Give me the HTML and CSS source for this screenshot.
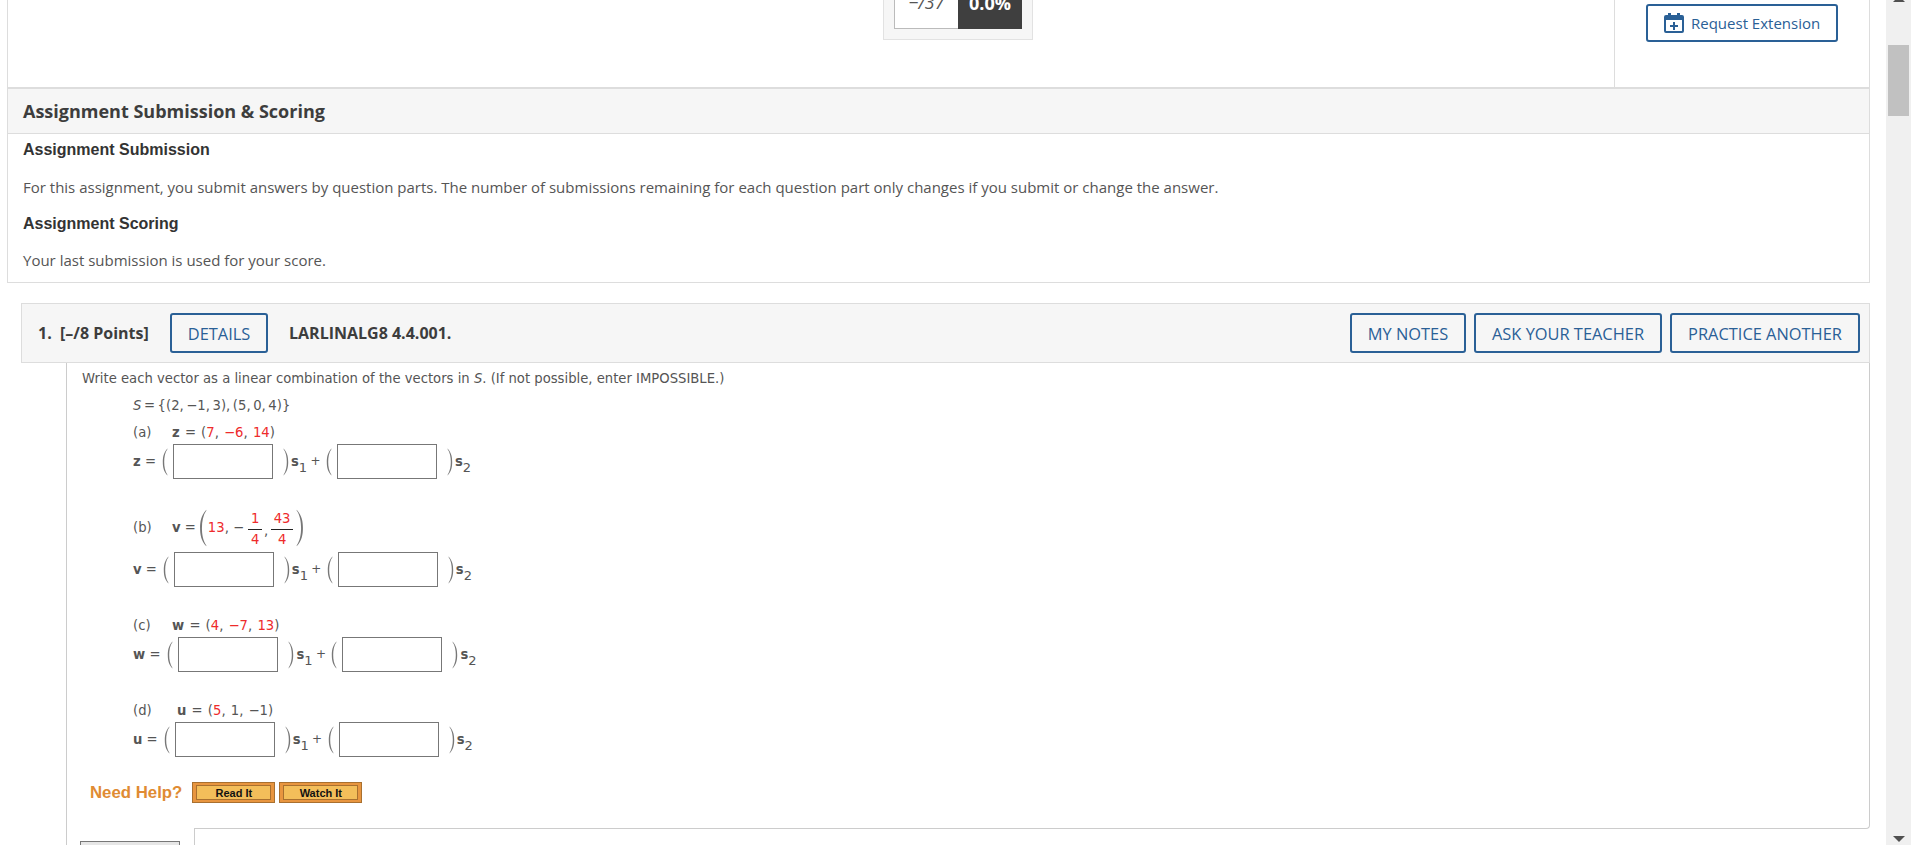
FILE: index.html
```html
<!DOCTYPE html>
<html lang="en">

<head>
    <meta charset="UTF-8">
    <meta name="viewport" content="width=device-width, initial-scale=1.0">
    <link rel="stylesheet" href="styles.css">
    <title>Assignment</title>
</head>

<body>
    <svg class="defs" width="0" height="0">
        <symbol id="lp" viewBox="0 0 6 30" preserveAspectRatio="none">
            <path d="M5.5 0.5C1.5 5 0.8 10 0.8 15C0.8 20 1.5 25 5.5 29.5L5.5 28.8C3 25 2.2 20 2.2 15C2.2 10 3 5 5.5 1.2Z" />
        </symbol>
        <symbol id="rp" viewBox="0 0 6 30" preserveAspectRatio="none">
            <path d="M0.5 0.5C4.5 5 5.2 10 5.2 15C5.2 20 4.5 25 0.5 29.5L0.5 28.8C3 25 3.8 20 3.8 15C3.8 10 3 5 0.5 1.2Z" />
        </symbol>
    </svg>

    <div class="page">
        <div class="main">
            <div class="assignment">
                <div class="top">
                    <div class="score-area">
                        <div class="score">
                            <span class="score-pts">&minus;/37</span>
                            <span class="score-pct">0.0%</span>
                        </div>
                    </div>
                    <div class="top-side">
                        <button class="btn btn-ext">
                            <svg class="cal" width="20" height="20" viewBox="0 0 20 20">
                                <path fill="#2a6096" d="M4 0h3v2h6V0h3v2h2a2 2 0 0 1 2 2v14a2 2 0 0 1-2 2H2a2 2 0 0 1-2-2V4a2 2 0 0 1 2-2h2zM2 7v10.500a.5.5 0 0 0 .5.500h15a.5.5 0 0 0 .5-.500V7z" />
                                <path fill="#2a6096" d="M9 9h2v3h3v2h-3v3H9v-3H6v-2h3z" />
                            </svg>
                            Request Extension
                        </button>
                    </div>
                </div>
                <h2 class="section-title">Assignment Submission &amp; Scoring</h2>
                <div class="section-body">
                    <h4>Assignment Submission</h4>
                    <p>For this assignment, you submit answers by question parts. The number of submissions remaining for each question part only changes if you submit or change the answer.</p>
                    <h4>Assignment Scoring</h4>
                    <p>Your last submission is used for your score.</p>
                </div>
            </div>

            <div class="q-head">
                <span class="q-num">1.</span>
                <span class="q-pts">[&ndash;/8 Points]</span>
                <button class="btn btn-details">DETAILS</button>
                <span class="q-code">LARLINALG8 4.4.001.</span>
                <div class="q-actions">
                    <button class="btn btn-my">MY NOTES</button>
                    <button class="btn btn-ask">ASK YOUR TEACHER</button>
                    <button class="btn btn-prac">PRACTICE ANOTHER</button>
                </div>
            </div>

            <div class="q-wrap">
                <div class="q-text">
                    <div class="prompt">Write each vector as a linear combination of the vectors in <i>S</i>. (If not possible, enter IMPOSSIBLE.)</div>
                    <div class="parts">
                        <div class="line set"><i>S</i> = {(2, &minus;1, 3), (5, 0, 4)}</div>

                        <div class="line part"><span class="tag">(a)</span><b>z</b>&nbsp;= (<span class="red">7</span>, <span class="red">&minus;6</span>, <span class="red">14</span>)</div>
                        <div class="eq">
                            <span class="lhs"><b>z</b> =</span>
                            <svg class="paren"><use href="#lp" /></svg>
                            <input class="ans" type="text">
                            <svg class="paren pr"><use href="#rp" /></svg>
                            <span class="s"><b>s</b><sub>1</sub></span>
                            <span class="plus">+</span>
                            <svg class="paren"><use href="#lp" /></svg>
                            <input class="ans" type="text">
                            <svg class="paren pr"><use href="#rp" /></svg>
                            <span class="s"><b>s</b><sub>2</sub></span>
                        </div>

                        <div class="line part part-b">
                            <span class="tag">(b)</span><b>v</b>&nbsp;=
                            <svg class="paren big"><use href="#lp" /></svg>
                            <span class="red">13</span>,&nbsp;<span class="minus">&minus;</span>
                            <span class="frac"><span class="red">1</span><span class="red bot">4</span></span><span class="fcomma">,</span>
                            <span class="frac frac-w"><span class="red">43</span><span class="red bot">4</span></span>
                            <svg class="paren big"><use href="#rp" /></svg>
                        </div>
                        <div class="eq eq-v">
                            <span class="lhs"><b>v</b> =</span>
                            <svg class="paren"><use href="#lp" /></svg>
                            <input class="ans" type="text">
                            <svg class="paren pr"><use href="#rp" /></svg>
                            <span class="s"><b>s</b><sub>1</sub></span>
                            <span class="plus">+</span>
                            <svg class="paren"><use href="#lp" /></svg>
                            <input class="ans" type="text">
                            <svg class="paren pr"><use href="#rp" /></svg>
                            <span class="s"><b>s</b><sub>2</sub></span>
                        </div>

                        <div class="line part part-c"><span class="tag">(c)</span><b>w</b>&nbsp;= (<span class="red">4</span>, <span class="red">&minus;7</span>, <span class="red">13</span>)</div>
                        <div class="eq">
                            <span class="lhs lhs-w"><b>w</b> =</span>
                            <svg class="paren"><use href="#lp" /></svg>
                            <input class="ans" type="text">
                            <svg class="paren pr"><use href="#rp" /></svg>
                            <span class="s"><b>s</b><sub>1</sub></span>
                            <span class="plus">+</span>
                            <svg class="paren"><use href="#lp" /></svg>
                            <input class="ans" type="text">
                            <svg class="paren pr"><use href="#rp" /></svg>
                            <span class="s"><b>s</b><sub>2</sub></span>
                        </div>

                        <div class="line part part-c"><span class="tag tag-d">(d)</span><b>u</b>&nbsp;= (<span class="red">5</span>, 1, &minus;1)</div>
                        <div class="eq">
                            <span class="lhs"><b>u</b> =</span>
                            <svg class="paren"><use href="#lp" /></svg>
                            <input class="ans" type="text">
                            <svg class="paren pr"><use href="#rp" /></svg>
                            <span class="s"><b>s</b><sub>1</sub></span>
                            <span class="plus">+</span>
                            <svg class="paren"><use href="#lp" /></svg>
                            <input class="ans" type="text">
                            <svg class="paren pr"><use href="#rp" /></svg>
                            <span class="s"><b>s</b><sub>2</sub></span>
                        </div>
                    </div>
                    <div class="help">
                        <span class="help-label">Need Help?</span>
                        <span class="help-btn"><span>Read It</span></span>
                        <span class="help-btn"><span>Watch It</span></span>
                    </div>
                </div>
                <div class="q-foot"></div>
                <div class="q-low">
                    <div class="gray-btn"></div>
                    <div class="answers"></div>
                </div>
            </div>
        </div>

        <div class="scrollbar">
            <span class="arrow-up"></span>
            <span class="thumb"></span>
            <span class="arrow-down"></span>
        </div>
    </div>
</body>

</html>
```

FILE: styles.css
```css
* {
    box-sizing: border-box;
}

html,
body {
    margin: 0;
    height: 845px;
    overflow: hidden;
    background-color: #fff;
}

body {
    font-family: "Open Sans", sans-serif;
    color: #444;
}

.defs {
    position: absolute;
}

.page {
    display: flex;
    height: 845px;
}

.main {
    width: 1886px;
    padding: 0 16px 0 7px;
}

/* top box */
.assignment {
    border: 1px solid #ddd;
    border-top: none;
    height: 282.5px;
}

.top {
    display: flex;
    height: 87px;
    overflow: hidden;
}

.score-area {
    flex: 1;
    display: flex;
    align-items: flex-end;
    padding-left: 875px;
    padding-bottom: 47px;
}

.score {
    display: flex;
    background-color: #f6f6f6;
    border: 1px solid #e2e2e2;
    padding: 0 10px 10px;
    height: 70px;
}

.score-pts,
.score-pct {
    width: 64px;
    display: flex;
    justify-content: center;
    align-items: flex-end;
    padding-bottom: 16px;
    font-size: 18px;
    line-height: 20px;
}

.score-pts {
    background-color: #fff;
    border: 1px solid #bbb;
    border-top: none;
    border-right: none;
    font-style: italic;
    color: #555;
}

.score-pct {
    background-color: #3f3f3f;
    color: #fff;
    font-weight: 700;
}

.top-side {
    width: 255px;
    border-left: 1px solid #ddd;
    padding: 4px 31px 0;
}

.btn {
    font-family: "Open Sans", sans-serif;
    color: #2a6096;
    background: transparent;
    border: 2px solid #2a6096;
    border-radius: 3px;
    padding: 0;
    font-size: 16.4px;
    height: 40px;
}

.btn-ext {
    width: 192px;
    height: 38px;
    font-size: 15px;
    background: #fff;
    display: flex;
    align-items: center;
    padding-left: 16px;
    gap: 7px;
}

.section-title {
    margin: 0;
    height: 47px;
    background-color: #f6f6f6;
    border-top: 2px solid #ddd;
    border-bottom: 1px solid #ddd;
    padding-left: 15px;
    font-size: 18px;
    line-height: 45px;
    font-weight: 700;
    color: #3d3d3d;
}

.section-body {
    padding-left: 15px;
}

.section-body h4 {
    margin: 6px 0 0;
    font-family: "Liberation Sans", sans-serif;
    font-size: 16px;
    line-height: 20px;
    color: #333;
}

.section-body p {
    margin: 17px 0 17px;
    font-size: 15px;
    line-height: 20px;
    color: #555;
}

.section-body p:last-child {
    margin-top: 16px;
}

/* question header */
.q-head {
    display: flex;
    align-items: center;
    margin: 20.500px 0 0 14px;
    height: 60px;
    background-color: #f6f6f6;
    border: 1px solid #ddd;
    padding-left: 16px;
    font-size: 16px;
    font-weight: 700;
    color: #3d3d3d;
}

.q-num {
    width: 22px;
}

.q-pts {
    width: 110px;
}

.btn-details {
    width: 98px;
}

.q-code {
    margin-left: 21px;
}

.q-actions {
    margin-left: auto;
    display: flex;
    gap: 8px;
    padding-right: 9px;
}

.btn-my {
    width: 116px;
}

.btn-ask {
    width: 188px;
}

.btn-prac {
    width: 190px;
}

/* question body */
.q-wrap {
    margin-left: 59px;
    height: 482px;
    border-left: 1px solid #ccc;
    font-family: "DejaVu Sans", sans-serif;
    font-size: 13.2px;
    color: #555;
}

.q-text {
    height: 462px;
    border-right: 1px solid #ccc;
    padding: 7px 0 0 15px;
}

.q-foot {
    height: 4px;
    margin-left: 127px;
    border-right: 1px solid #ccc;
    border-bottom: 1px solid #ccc;
    border-bottom-right-radius: 4px;
}

.q-low {
    display: flex;
}

.gray-btn {
    width: 100px;
    height: 30px;
    margin: 12px 0 0 13px;
    background-color: #e6e6e6;
    border: 1px solid #777;
}

.answers {
    flex: 1;
    height: 30px;
    margin-left: 14px;
    border-left: 1px solid #ccc;
}

.prompt {
    line-height: 18px;
}

.parts {
    padding-left: 51px;
}

.line {
    line-height: 18px;
    white-space: nowrap;
}

.set {
    margin-top: 9px;
    word-spacing: -1.6px;
}

.part {
    margin-top: 9px;
    word-spacing: 1px;
}

.part-c {
    margin-top: 30px;
}

.part-b {
    display: flex;
    align-items: center;
    height: 40px;
    margin-top: 29px;
    word-spacing: 0;
}

.tag {
    display: inline-block;
    width: 39px;
}

.tag-d {
    width: 44px;
}

.red {
    color: #ee2b2b;
}

.minus {
    margin: 0 3px 0 0;
}

.frac {
    display: inline-flex;
    flex-direction: column;
    align-items: center;
    width: 14px;
    margin-left: 1px;
}

.frac-w {
    width: 22px;
}

.frac span {
    line-height: 21px;
}

.frac .bot {
    line-height: 19px;
    border-top: 1px solid #222;
    width: 100%;
    text-align: center;
}

.fcomma {
    width: 8px;
    padding-left: 2px;
    padding-top: 6px;
}

.eq {
    display: flex;
    align-items: center;
    height: 35px;
    margin-top: 2px;
}

.eq-v {
    margin-top: 4px;
}

.lhs {
    margin-right: 6px;
}

.lhs-w {
    margin-right: 7px;
}

.paren {
    width: 6px;
    height: 28px;
    fill: #777;
    flex: none;
    margin-right: 5px;
}

.pr {
    margin: 0 2px 0 10px;
}

.paren.big {
    width: 8px;
    height: 38px;
    margin: 0 1px 0 3px;
}

.ans {
    width: 100px;
    height: 35px;
    border: 1px solid #777;
    background: #fff;
    flex: none;
    border-radius: 0;
    padding: 0;
}

.s {
    width: 19px;
    flex: none;
}

.s sub {
    font-size: 13px;
    line-height: 0;
    vertical-align: -6px;
}

.plus {
    width: 11px;
    margin-right: 5px;
    font-size: 12px;
    text-align: center;
    padding-bottom: 2px;
}

.help {
    display: flex;
    align-items: center;
    gap: 4px;
    margin: 25px 0 0 8px;
}

.help-label {
    font-family: "Liberation Sans", sans-serif;
    font-size: 16.8px;
    font-weight: 700;
    color: #e08b33;
    margin-right: 6px;
}

.help-btn {
    display: block;
    width: 83px;
    height: 21px;
    padding: 2px 3px;
    background-color: #e8953f;
    border: 1px solid #a9702f;
}

.help-btn span {
    display: block;
    height: 15px;
    line-height: 14px;
    background-color: #f3be5a;
    border: 1px solid #a9702f;
    text-align: center;
    font-family: "Liberation Sans", sans-serif;
    font-size: 11px;
    font-weight: 700;
    color: #111;
}

/* scrollbar */
.scrollbar {
    position: relative;
    width: 25px;
    background-color: #f0f0f0;
}

.thumb {
    position: absolute;
    left: 2px;
    top: 45px;
    width: 21px;
    height: 71px;
    background-color: #c1c1c1;
}

.arrow-up {
    position: absolute;
    left: 7px;
    top: -4px;
    border-left: 6px solid transparent;
    border-right: 6px solid transparent;
    border-bottom: 6px solid #505050;
}

.arrow-down {
    position: absolute;
    left: 7px;
    top: 836px;
    border-left: 6px solid transparent;
    border-right: 6px solid transparent;
    border-top: 6px solid #505050;
}
```
